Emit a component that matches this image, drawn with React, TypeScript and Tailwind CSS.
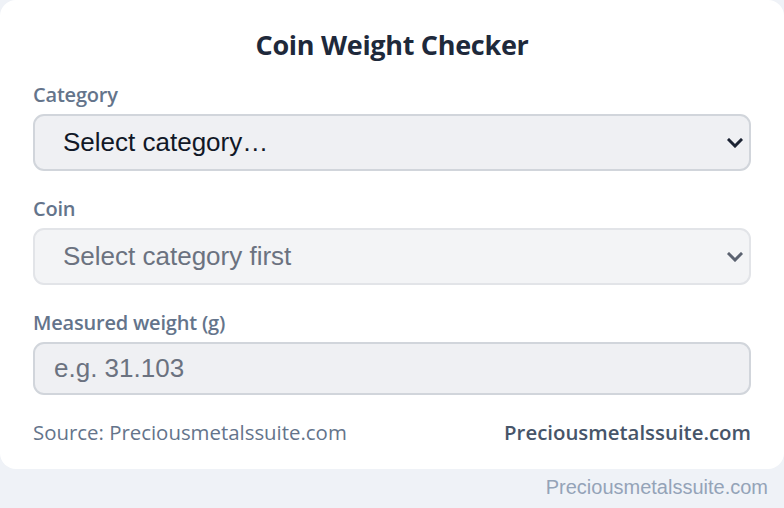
import React from 'react';

const Chevron: React.FC<{ muted?: boolean }> = ({ muted }) => (
  <svg
    width="16"
    height="10"
    viewBox="0 0 16 10"
    className={`pointer-events-none absolute right-[8px] top-1/2 -translate-y-1/2 ${muted ? 'text-[#5b6270]' : 'text-[#1c2333]'}`}
  >
    <path d="M2 2 L8 8 L14 2" fill="none" stroke="currentColor" strokeWidth="3" strokeLinecap="square" />
  </svg>
);

const Label: React.FC<{ children: React.ReactNode }> = ({ children }) => (
  <label className="mb-[8px] block text-[20px] leading-[23px] font-semibold tracking-[-0.2px] text-[#64748b]">{children}</label>
);

export default function App() {
  return (
    <div className="min-h-[508px] w-full bg-[#eff2f7] font-['Segoe_UI','Open_Sans',sans-serif]">
      <div className="rounded-2xl bg-white px-[33px] pt-[30px] pb-[24px]">
        <h1 className="text-center text-[27px] leading-[30px] font-bold tracking-[-0.3px] text-[#1e293b]">Coin Weight Checker</h1>

        <div className="mt-[23px]">
          <Label>Category</Label>
          <div className="relative">
            <select className="h-[57px] w-full appearance-none rounded-[11px] border-2 border-[#d1d5db] bg-[#eff0f3] pl-[28px] font-['Liberation_Sans',Arial,sans-serif] text-[26px] text-[#111827] outline-none">
              <option>Select category…</option>
            </select>
            <Chevron />
          </div>
        </div>

        <div className="mt-[26px]">
          <Label>Coin</Label>
          <div className="relative">
            <select
              disabled
              className="h-[57px] w-full appearance-none rounded-[11px] border-2 border-[#e2e4e8] bg-[#f3f4f6] pl-[28px] font-['Liberation_Sans',Arial,sans-serif] text-[26px] text-[#6b7280] outline-none"
            >
              <option>Select category first</option>
            </select>
            <Chevron muted />
          </div>
        </div>

        <div className="mt-[26px]">
          <Label>Measured weight (g)</Label>
          <input
            type="text"
            placeholder="e.g. 31.103"
            className="h-[53px] w-full rounded-[11px] border-2 border-[#d1d5db] bg-[#eff0f3] px-[19px] font-['Liberation_Sans',Arial,sans-serif] text-[26px] text-[#111827] outline-none placeholder:text-[#6b7280]"
          />
        </div>

        <div className="mt-[24px] flex items-center justify-between text-[20.4px] leading-[26px]">
          <span className="text-[#64748b]">Source: Preciousmetalssuite.com</span>
          <span className="font-semibold text-[#475569]">Preciousmetalssuite.com</span>
        </div>
      </div>

      <div className="pt-[6px] pr-[16px] text-right font-['Liberation_Sans',Arial,sans-serif] text-[20px] leading-[24px] text-[#94a3b8]">
        Preciousmetalssuite.com
      </div>
    </div>
  );
}
